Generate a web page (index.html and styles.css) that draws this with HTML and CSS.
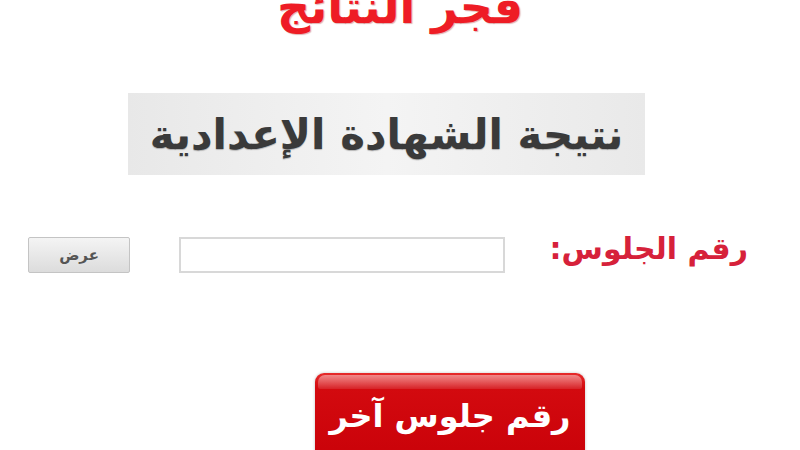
FILE: index.html
```html
<!DOCTYPE html>
<html lang="ar">
<head>
<meta charset="utf-8">
<link rel="stylesheet" href="styles.css">
</head>
<body>
<div class="page">
  <div class="top">
    <div class="title">فجر النتائج</div>
  </div>
  <div class="heading">نتيجة الشهادة الإعدادية</div>
  <div class="row">
    <label class="label">رقم الجلوس:</label>
    <div class="input"></div>
    <div class="show">عرض</div>
  </div>
  <div class="again">
    <div class="again-btn">
      <span class="shine"></span>
      <span class="again-text">رقم جلوس آخر</span>
    </div>
  </div>
</div>
</body>
</html>
```
FILE: styles.css
```css
html, body {
  margin: 0;
  padding: 0;
  background: #ffffff;
}
.page {
  width: 800px;
  height: 450px;
  overflow: hidden;
  font-family: "DejaVu Sans", sans-serif;
  font-weight: bold;
}
.top {
  height: 40px;
  overflow: hidden;
  display: flex;
  justify-content: center;
}
.title {
  margin-top: -23px;
  color: #ee1c25;
  font-size: 46px;
  line-height: 60px;
  direction: rtl;
  white-space: nowrap;
  text-shadow: 1px 1px 1px rgba(150,0,0,0.3);
}
.heading {
  margin: 53px 0 0 128px;
  width: 517px;
  height: 82px;
  background: linear-gradient(90deg, #e8e8e8 0%, #f4f4f4 50%, #e9e9e9 100%);
  color: #3a3a3a;
  font-size: 42px;
  display: flex;
  align-items: center;
  justify-content: center;
  direction: rtl;
  text-shadow: 0 1px 1px rgba(0,0,0,0.25);
}
.row {
  margin-top: 62px;
  display: flex;
  direction: rtl;
  align-items: center;
  padding-right: 52px;
  height: 36px;
}
.label {
  width: 203px;
  color: #d6213a;
  font-size: 30px;
  margin-top: -14px;
  white-space: nowrap;
}
.input {
  margin-right: 40px;
  width: 322px;
  height: 32px;
  border: 2px solid #d8d8d8;
  background: #fff;
}
.show {
  margin-right: 49px;
  width: 100px;
  height: 34px;
  border: 1px solid #c4c4c4;
  border-radius: 2px;
  background: linear-gradient(#f4f4f4, #dcdcdc);
  color: #555;
  font-size: 15px;
  display: flex;
  align-items: center;
  justify-content: center;
}
.again {
  margin-top: 100px;
  padding-left: 315px;
}
.again-btn {
  position: relative;
  width: 270px;
  height: 100px;
  border-radius: 9px;
  background: linear-gradient(#e62a2a 0%, #d30a0f 15%, #c80008 100%);
  box-shadow: 0 0 3px rgba(0,0,0,0.25);
  overflow: hidden;
  display: flex;
  justify-content: center;
}
.shine {
  position: absolute;
  left: 3px;
  right: 3px;
  top: 2px;
  height: 14px;
  border-radius: 7px 7px 2px 2px;
  background: linear-gradient(rgba(255,255,255,0.45), rgba(255,255,255,0.1));
}
.again-text {
  margin-top: 24px;
  color: #ffffff;
  font-size: 32px;
  direction: rtl;
  white-space: nowrap;
  height: 50px;
}
```
